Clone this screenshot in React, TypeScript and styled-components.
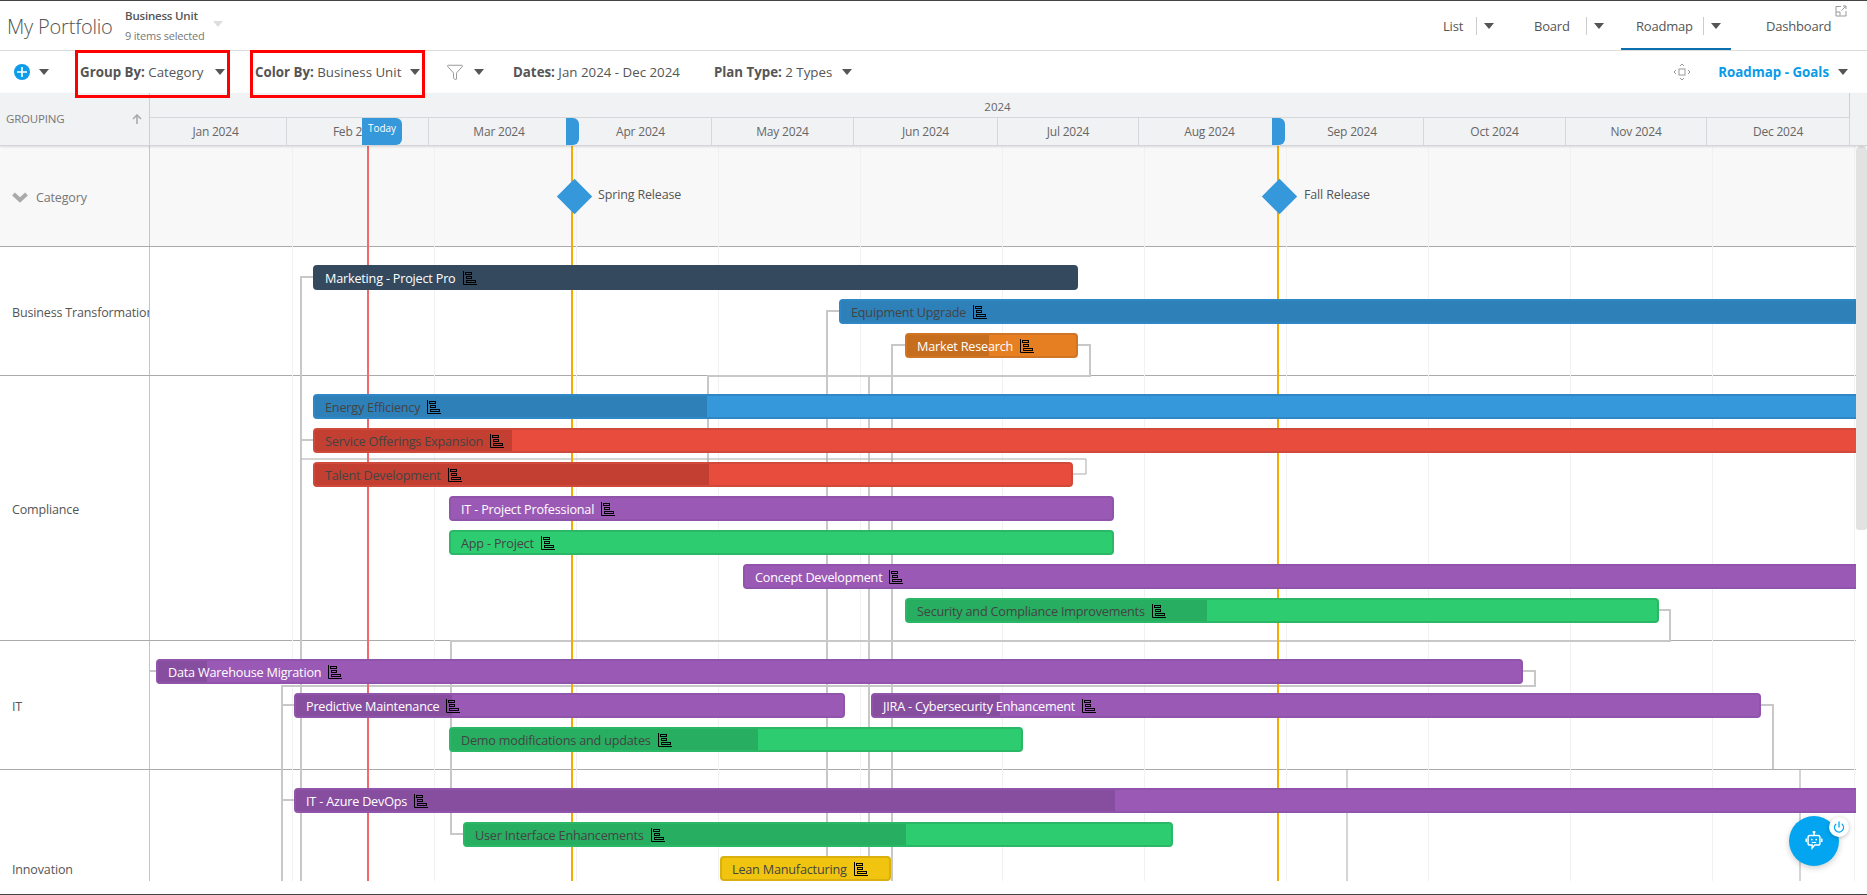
import React from "react";
import styled, { createGlobalStyle } from "styled-components";
import { Filter, Power } from "lucide-react";

const GlobalStyle = createGlobalStyle`
  html, body {
    margin: 0;
    padding: 0;
    background: #fff;
    overflow: hidden;
  }
  * {
    box-sizing: border-box;
  }
  body {
    font-family: "Open Sans", "Noto Sans", "Liberation Sans", sans-serif;
    color: #555;
  }
`;

const Page = styled.div`
  position: relative;
  width: 1867px;
  height: 895px;
  border-top: 1px solid #444;
  border-bottom: 1px solid #444;
  display: flex;
  flex-direction: column;
  overflow: hidden;
`;

const TopBar = styled.div`
  height: 50px;
  flex: none;
  display: flex;
  align-items: center;
  border-bottom: 1px solid #dcdcdc;
  padding-left: 7px;
`;

const Title = styled.div`
  font-size: 20px;
  font-weight: 300;
  color: #555;
  letter-spacing: -0.2px;
  width: 118px;
  margin-top: 2px;
`;

const Selector = styled.div`
  display: flex;
  flex-direction: column;
  gap: 5px;
  font-size: 11px;
  margin-top: -1px;
  letter-spacing: -0.2px;
`;

const SelectorName = styled.span`
  font-size: 11.5px;
  font-weight: 600;
  color: #555;
`;

const SelectorCount = styled.span`
  color: #777;
`;

const Tabs = styled.div`
  margin-left: auto;
  display: flex;
  height: 100%;
  align-items: stretch;
`;

const Tab = styled.div<{ $w: number; $active?: boolean }>`
  width: ${(p) => p.$w}px;
  display: flex;
  align-items: center;
  gap: 7px;
  padding: 2px 0 0 15px;
  font-size: 13px;
  color: #555;
  letter-spacing: -0.2px;
  border-bottom: 2px solid ${(p) => (p.$active ? "#0b6fb0" : "transparent")};
`;

const TabDivider = styled.span<{ $ml: number }>`
  width: 1px;
  height: 18px;
  background: #ccc;
  margin-left: ${(p) => p.$ml}px;
`;

const DashTab = styled.div`
  position: relative;
  width: 136px;
  padding-left: 35px;
  display: flex;
  align-items: center;
  font-size: 13px;
  color: #555;
  letter-spacing: -0.2px;
`;

const ExpandIcon = styled.svg`
  position: absolute;
  top: 4px;
  left: 104px;
`;

const Caret = styled.span`
  display: inline-block;
  flex: none;
  width: 0;
  height: 0;
  border-left: 5px solid transparent;
  border-right: 5px solid transparent;
  border-top: 6px solid #555;
`;

const SelectorCaret = styled(Caret)`
  border-top-color: #ddd;
  margin: 0 0 4px 8px;
`;

const Toolbar = styled.div`
  height: 42px;
  flex: none;
  display: flex;
  align-items: center;
  font-size: 13.3px;
  color: #555;
  padding-left: 14px;
`;

const ToolItem = styled.div<{ $ml?: number }>`
  display: flex;
  align-items: center;
  gap: 10px;
  margin-left: ${(p) => p.$ml ?? 0}px;
  white-space: nowrap;
`;

const BoxedItem = styled.div<{ $ml: number; $w: number }>`
  position: relative;
  z-index: 5;
  display: flex;
  align-items: center;
  justify-content: space-between;
  margin-left: ${(p) => p.$ml}px;
  width: ${(p) => p.$w}px;
  height: 48px;
  margin-top: 3px;
  padding: 0 2px 3px 2px;
  border: 3px solid #f00;
  white-space: nowrap;
`;

const RightTools = styled.div`
  margin-left: auto;
  display: flex;
  align-items: center;
  padding-right: 19px;
`;

const GoalsLabel = styled.b`
  color: #0a9be8;
  font-weight: 700;
  margin-left: 27px;
  margin-right: 9px;
`;

const PlusCircle = styled.span`
  width: 16px;
  height: 16px;
  border-radius: 50%;
  background: #0d9bea;
  color: #fff;
  display: flex;
  align-items: center;
  justify-content: center;
`;

const GanttHeader = styled.div`
  height: 53px;
  flex: none;
  display: flex;
  background: #f1f2f4;
  border-bottom: 1px solid #d4d5d8;
  box-shadow: 0 1px 2px rgba(0, 0, 0, 0.12);
  position: relative;
  z-index: 4;
`;

const GroupingCell = styled.div`
  width: 150px;
  flex: none;
  display: flex;
  align-items: center;
  justify-content: space-between;
  padding: 0 7px 1px 6px;
  border-right: 1px solid #d0d0d0;
  font-size: 11.5px;
  letter-spacing: -0.2px;
  color: #777;
`;

const Timescale = styled.div`
  width: 1700px;
  flex: none;
  display: flex;
  flex-direction: column;
  border-right: 1px solid #d0d0d0;
`;

const YearRow = styled.div`
  height: 25px;
  flex: none;
  display: flex;
  align-items: center;
  justify-content: center;
  padding: 2px 4px 0 0;
  border-bottom: 1px solid #d6d7da;
  font-size: 11.5px;
  color: #666;
`;

const MonthRow = styled.div`
  position: relative;
  flex: 1;
  display: flex;
`;

const MonthCell = styled.div<{ $w: number }>`
  width: ${(p) => p.$w}px;
  flex: none;
  display: flex;
  align-items: center;
  justify-content: center;
  border-right: 1px solid #d6d7da;
  font-size: 12px;
  letter-spacing: -0.2px;
  color: #666;
  &:first-of-type {
    padding-right: 5px;
  }
  &:last-of-type {
    border-right: none;
  }
`;

const MarkerTab = styled.div<{ $left: number; $w: number }>`
  position: absolute;
  top: 0;
  bottom: 0;
  left: ${(p) => p.$left}px;
  width: ${(p) => p.$w}px;
  background: #3498db;
  border-radius: 0 6px 6px 0;
  color: #fff;
  font-size: 10px;
  font-weight: 500;
  text-align: center;
  padding-top: 3px;
`;

const Body = styled.div`
  position: relative;
  height: 735px;
  flex: none;
  overflow: hidden;
`;

const GroupRow = styled.div<{ $h: number; $shaded?: boolean }>`
  width: 1856px;
  height: ${(p) => p.$h}px;
  display: grid;
  grid-template-columns: 150px 1fr;
  overflow: hidden;
  border-bottom: 1px solid #aaa;
  background: ${(p) => (p.$shaded ? "#f8f8f8" : "#fff")};
`;

const GroupLabel = styled.div`
  display: flex;
  align-items: center;
  padding: 2px 0 0 12px;
  font-size: 12.5px;
  letter-spacing: -0.15px;
  color: #555;
  white-space: nowrap;
  overflow: hidden;
  border-right: 1px solid #c4c4c4;
`;

const CategoryLabel = styled(GroupLabel)`
  gap: 8px;
  color: #777;
`;

const Lane = styled.div`
  position: relative;
`;

const Diamond = styled.div<{ $left: number }>`
  position: absolute;
  z-index: 2;
  left: ${(p) => p.$left}px;
  top: 38px;
  width: 25px;
  height: 25px;
  background: #3498db;
  transform: rotate(45deg);
`;

const MilestoneText = styled.span<{ $left: number }>`
  position: absolute;
  z-index: 2;
  left: ${(p) => p.$left}px;
  top: 40px;
  font-size: 12.5px;
  letter-spacing: -0.15px;
  color: #555;
`;

const Bar = styled.div<{ $left: number; $top: number; $w: number; $fill: string; $rim: string; $ink: string }>`
  position: absolute;
  z-index: 2;
  left: ${(p) => p.$left}px;
  top: ${(p) => p.$top}px;
  width: ${(p) => p.$w}px;
  height: 25px;
  background: ${(p) => p.$fill};
  border: 2px solid ${(p) => p.$rim};
  border-radius: 4px;
  color: ${(p) => p.$ink};
  font-size: 12.65px;
  letter-spacing: -0.2px;
  display: flex;
  align-items: center;
  gap: 7px;
  padding-left: 10px;
  white-space: nowrap;
`;

const BarProgress = styled.span<{ $w: number; $edge: string }>`
  position: absolute;
  left: 0;
  top: 0;
  bottom: 0;
  width: ${(p) => p.$w}px;
  background: ${(p) => p.$edge};
`;

const BarText = styled.span`
  position: relative;
`;

const BarIcon = styled.svg`
  position: relative;
  flex: none;
`;

const Lines = styled.svg`
  position: absolute;
  z-index: 1;
  left: 0;
  top: 0;
  pointer-events: none;
`;

const ScrollThumb = styled.div`
  position: absolute;
  right: 0;
  top: 0;
  width: 11px;
  height: 384px;
  background: #e2e2e2;
  border-radius: 5px 5px 3px 3px;
`;

const BotButton = styled.div`
  position: absolute;
  z-index: 6;
  left: 1789px;
  top: 815px;
  width: 50px;
  height: 50px;
  border-radius: 50%;
  background: #03a5f0;
  box-shadow: 0 2px 6px rgba(0, 0, 0, 0.2);
  display: flex;
  align-items: center;
  justify-content: center;
`;

const PowerBadge = styled.div`
  position: absolute;
  right: -10px;
  top: 1px;
  width: 20px;
  height: 20px;
  border-radius: 50%;
  background: #fff;
  color: #03a5f0;
  box-shadow: 0 1px 4px rgba(0, 0, 0, 0.25);
  display: flex;
  align-items: center;
  justify-content: center;
`;

const palette = {
  navy: { fill: "#34495e", rim: "#34495e", edge: "#34495e", ink: "#fff" },
  blue: { fill: "#3498db", rim: "#2f88c5", edge: "#2e80b9", ink: "#444" },
  red: { fill: "#e74c3c", rim: "#cf4a3b", edge: "#c33f31", ink: "#444" },
  purple: { fill: "#9b59b6", rim: "#9054aa", edge: "#874ea0", ink: "#fff" },
  green: { fill: "#2ecc71", rim: "#2ab866", edge: "#27ae60", ink: "#444" },
  orange: { fill: "#e67e22", rim: "#cf7524", edge: "#c76d1e", ink: "#fff" },
  yellow: { fill: "#f1c40f", rim: "#d9b00e", edge: "#d4ac0d", ink: "#444" },
};

type Tone = keyof typeof palette;

interface BarData {
  name: string;
  tone: Tone;
  y: number;
  x0: number;
  x1: number;
  done?: number;
}

interface Group {
  name: string;
  top: number;
  height: number;
  bars: BarData[];
}

const HEADER_BOTTOM = 146;
const LABEL_W = 150;

const months = [
  ["Jan 2024", 137],
  ["Feb 2024", 142],
  ["Mar 2024", 141],
  ["Apr 2024", 142],
  ["May 2024", 142],
  ["Jun 2024", 144],
  ["Jul 2024", 141],
  ["Aug 2024", 142],
  ["Sep 2024", 143],
  ["Oct 2024", 142],
  ["Nov 2024", 141],
  ["Dec 2024", 143],
] as const;

const groups: Group[] = [
  {
    name: "Business Transformation",
    top: 247,
    height: 129,
    bars: [
      { name: "Marketing - Project Pro", tone: "navy", y: 265, x0: 313, x1: 1078 },
      { name: "Equipment Upgrade", tone: "blue", y: 299, x0: 839, x1: 1900, done: 1900 },
      { name: "Market Research", tone: "orange", y: 333, x0: 905, x1: 1078, done: 989 },
    ],
  },
  {
    name: "Compliance",
    top: 376,
    height: 265,
    bars: [
      { name: "Energy Efficiency", tone: "blue", y: 394, x0: 313, x1: 1900, done: 707 },
      { name: "Service Offerings Expansion", tone: "red", y: 428, x0: 313, x1: 1900, done: 512 },
      { name: "Talent Development", tone: "red", y: 462, x0: 313, x1: 1073, done: 709 },
      { name: "IT - Project Professional", tone: "purple", y: 496, x0: 449, x1: 1114 },
      { name: "App - Project", tone: "green", y: 530, x0: 449, x1: 1114 },
      { name: "Concept Development", tone: "purple", y: 564, x0: 743, x1: 1900 },
      { name: "Security and Compliance Improvements", tone: "green", y: 598, x0: 905, x1: 1659, done: 1207 },
    ],
  },
  {
    name: "IT",
    top: 641,
    height: 129,
    bars: [
      { name: "Data Warehouse Migration", tone: "purple", y: 659, x0: 156, x1: 1523, done: 207 },
      { name: "Predictive Maintenance", tone: "purple", y: 693, x0: 294, x1: 845, done: 452 },
      { name: "JIRA - Cybersecurity Enhancement", tone: "purple", y: 693, x0: 871, x1: 1761, done: 1000 },
      { name: "Demo modifications and updates", tone: "green", y: 727, x0: 449, x1: 1023, done: 758 },
    ],
  },
  {
    name: "Innovation",
    top: 770,
    height: 198,
    bars: [
      { name: "IT - Azure DevOps", tone: "purple", y: 788, x0: 294, x1: 1900, done: 1115 },
      { name: "User Interface Enhancements", tone: "green", y: 822, x0: 463, x1: 1173, done: 906 },
      { name: "Lean Manufacturing", tone: "yellow", y: 856, x0: 720, x1: 891 },
    ],
  },
];

// page coordinates of the dependency links, [x, y] pairs
const links: number[][] = [
  [313, 277, 301, 277, 301, 881],
  [839, 311, 827, 311, 827, 881],
  [905, 345, 892, 345, 892, 881],
  [1078, 345, 1090, 345, 1090, 376, 708, 376, 708, 462],
  [869, 376, 869, 881],
  [313, 440, 301, 440],
  [1659, 610, 1670, 610, 1670, 641, 451, 641, 451, 834, 463, 834],
  [156, 671, 150, 671],
  [1523, 671, 1535, 671, 1535, 686, 282, 686, 282, 881],
  [294, 705, 282, 705],
  [294, 800, 282, 800],
  [1761, 705, 1773, 705, 1773, 769],
];

const thinLinks: number[][] = [
  [301, 459, 1086, 459, 1086, 474, 1073, 474],
  [1347, 769, 1347, 881],
  [1800, 769, 1800, 881],
];

const gridXs = Array.from({ length: 12 }, (_, i) => 292 + i * 142);

const toPoints = (pts: number[]) => {
  const out: string[] = [];
  for (let i = 0; i < pts.length; i += 2) {
    out.push(`${pts[i]},${pts[i + 1] - HEADER_BOTTOM}`);
  }
  return out.join(" ");
};

const GanttGlyph = () => (
  <BarIcon width="14" height="14" viewBox="0 0 14 14" fill="none" stroke="#000" strokeWidth="1">
    <path d="M.5 0v13.500H14" />
    <rect x="2.500" y="1.500" width="6" height="2" />
    <rect x="3.500" y="5.500" width="5" height="2" />
    <rect x="3.500" y="9.500" width="9" height="2" />
  </BarIcon>
);

const GanttBar: React.FC<{ bar: BarData; top: number }> = ({ bar, top }) => {
  const tone = palette[bar.tone];
  return (
    <Bar
      $left={bar.x0 - LABEL_W}
      $top={bar.y - top}
      $w={bar.x1 - bar.x0}
      $fill={tone.fill}
      $rim={tone.rim}
      $ink={tone.ink}
    >
      {bar.done ? <BarProgress $w={bar.done - bar.x0 - 2} $edge={tone.edge} /> : null}
      <BarText>{bar.name}</BarText>
      <GanttGlyph />
    </Bar>
  );
};

const App: React.FC = () => {
  return (
    <Page>
      <GlobalStyle />
      <TopBar>
        <Title>My Portfolio</Title>
        <Selector>
          <SelectorName>Business Unit</SelectorName>
          <SelectorCount>9 items selected</SelectorCount>
        </Selector>
        <SelectorCaret />
        <Tabs>
          <Tab $w={91}>
            List <TabDivider $ml={6} /> <Caret />
          </Tab>
          <Tab $w={102}>
            Board <TabDivider $ml={9} /> <Caret />
          </Tab>
          <Tab $w={110} $active>
            Roadmap <TabDivider $ml={3} /> <Caret />
          </Tab>
          <DashTab>
            Dashboard
            <ExpandIcon width="12" height="12" viewBox="0 0 12 12" fill="none" stroke="#999" strokeWidth="1">
              <path d="M6 1.500H1v9.500h10V6" />
              <path d="M1 7h4v3.500M6.500 5.500L11 1M8 1h3v3" />
            </ExpandIcon>
          </DashTab>
        </Tabs>
      </TopBar>
      <Toolbar>
        <PlusCircle>
          <svg width="10" height="10" viewBox="0 0 10 10" stroke="#fff" strokeWidth="1.6">
            <path d="M5 0v10M0 5h10" />
          </svg>
        </PlusCircle>
        <ToolItem $ml={9}>
          <Caret />
        </ToolItem>
        <BoxedItem $ml={26} $w={155}>
          <span>
            <b>Group By:</b> Category
          </span>
          <Caret />
        </BoxedItem>
        <BoxedItem $ml={20} $w={175}>
          <span>
            <b>Color By:</b> Business Unit
          </span>
          <Caret />
        </BoxedItem>
        <ToolItem $ml={21}>
          <Filter size={18} strokeWidth={1} color="#777" />
          <Caret />
        </ToolItem>
        <ToolItem $ml={29}>
          <span>
            <b>Dates:</b> Jan 2024 - Dec 2024
          </span>
        </ToolItem>
        <ToolItem $ml={34}>
          <span>
            <b>Plan Type:</b> 2 Types
          </span>
          <Caret />
        </ToolItem>
        <RightTools>
          <svg width="18" height="18" viewBox="0 0 18 18" fill="none" stroke="#999" strokeWidth="1">
            <rect x="6" y="6" width="6" height="6" />
            <path d="M7 3l2-2 2 2M7 15l2 2 2-2M3 7L1 9l2 2M15 7l2 2-2 2" />
          </svg>
          <GoalsLabel>Roadmap - Goals</GoalsLabel>
          <Caret />
        </RightTools>
      </Toolbar>
      <GanttHeader>
        <GroupingCell>
          GROUPING
          <svg width="10" height="10" viewBox="0 0 10 10" fill="none" stroke="#aaa" strokeWidth="1.6">
            <path d="M5 10V1M1 5l4-4 4 4" />
          </svg>
        </GroupingCell>
        <Timescale>
          <YearRow>2024</YearRow>
          <MonthRow>
            {months.map(([label, w]) => (
              <MonthCell key={label} $w={w}>
                {label}
              </MonthCell>
            ))}
            <MarkerTab $left={212} $w={40}>
              Today
            </MarkerTab>
            <MarkerTab $left={416} $w={13} />
            <MarkerTab $left={1122} $w={13} />
          </MonthRow>
        </Timescale>
      </GanttHeader>
      <Body>
        <GroupRow $h={101} $shaded>
          <CategoryLabel>
            <svg width="16" height="11" viewBox="0 0 16 11" fill="none" stroke="#aaa" strokeWidth="4">
              <path d="M1.500 2L8 8l6.500-6" />
            </svg>
            Category
          </CategoryLabel>
          <Lane>
            <Diamond $left={412} />
            <MilestoneText $left={448}>Spring Release</MilestoneText>
            <Diamond $left={1117} />
            <MilestoneText $left={1154}>Fall Release</MilestoneText>
          </Lane>
        </GroupRow>
        {groups.map((group) => (
          <GroupRow key={group.name} $h={group.height}>
            <GroupLabel>{group.name}</GroupLabel>
            <Lane>
              {group.bars.map((bar) => (
                <GanttBar key={bar.name} bar={bar} top={group.top} />
              ))}
            </Lane>
          </GroupRow>
        ))}
        <Lines width="1856" height="735">
          {gridXs.map((x) => (
            <line key={x} x1={x + 0.5} x2={x + 0.5} y1="0" y2="735" stroke="#f1f1f1" />
          ))}
          {links.map((pts, i) => (
            <polyline key={i} points={toPoints(pts)} fill="none" stroke="#c8c8c8" strokeWidth="2" />
          ))}
          {thinLinks.map((pts, i) => (
            <polyline key={i} points={toPoints(pts)} fill="none" stroke="#aaa" strokeWidth="1" />
          ))}
          <line x1="368" x2="368" y1="0" y2="735" stroke="#f0696c" strokeWidth="2" />
          <line x1="572" x2="572" y1="0" y2="735" stroke="#f5ab00" strokeWidth="2" />
          <line x1="1278" x2="1278" y1="0" y2="735" stroke="#f5ab00" strokeWidth="2" />
        </Lines>
        <ScrollThumb />
      </Body>
      <BotButton>
        <svg width="18" height="20" viewBox="0 0 24 27" fill="none" stroke="#fff" strokeWidth="2">
          <path d="M12 1.500v4" />
          <circle cx="12" cy="1.500" r="1" fill="#fff" />
          <path d="M6.500 6h11a2.500 2.500 0 0 1 2.500 2.500v8a2.500 2.500 0 0 1-2.500 2.500H13l-3.500 4v-4h-3A2.500 2.500 0 0 1 4 16.500v-8A2.500 2.500 0 0 1 6.500 6z" />
          <path d="M1.500 10v5M22.500 10v5" />
          <circle cx="9" cy="11.500" r="1.200" fill="#fff" stroke="none" />
          <circle cx="15" cy="11.500" r="1.200" fill="#fff" stroke="none" />
          <path d="M9 15.500h6" strokeWidth="1.500" />
        </svg>
        <PowerBadge>
          <Power size={12} strokeWidth={2.6} />
        </PowerBadge>
      </BotButton>
    </Page>
  );
};

export default App;
